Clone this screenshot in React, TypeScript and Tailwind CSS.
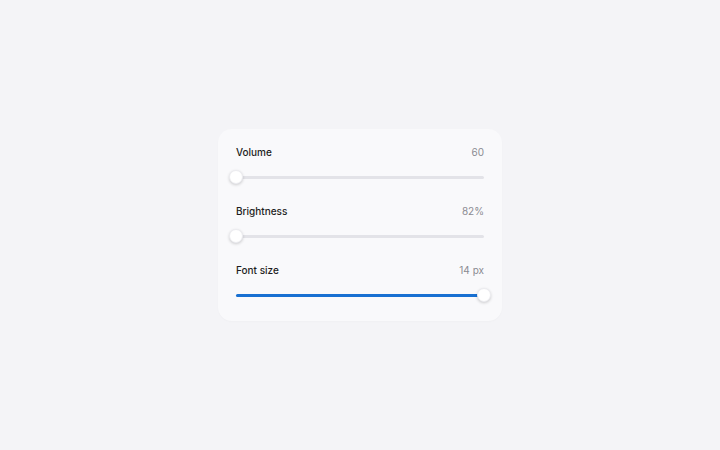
import React from "react";

type Row = { label: string; value: string; pct: number };

const rows: Row[] = [
  { label: "Volume", value: "60", pct: 0 },
  { label: "Brightness", value: "82%", pct: 0 },
  { label: "Font size", value: "14 px", pct: 100 },
];

function Slider({ pct }: { pct: number }) {
  return (
    <div className="relative h-[14px] flex items-center">
      <div className="h-[3px] w-full rounded-full bg-[#e3e3e8]" />
      <div
        className="absolute left-0 h-[3px] rounded-full bg-[#1870d2]"
        style={{ width: `${pct}%` }}
      />
      <div
        className="absolute top-0 h-[14px] w-[14px] -ml-[7px] rounded-full bg-white shadow-[0_1px_3px_rgba(0,0,0,0.18)] border border-[#ececf0]"
        style={{ left: `${pct}%` }}
      />
    </div>
  );
}

export default function App() {
  return (
    <div
      className="min-h-screen w-full bg-[#f4f4f7] flex items-center justify-center"
      style={{ fontFamily: "Inter, 'Liberation Sans', sans-serif" }}
    >
      <div className="w-[284px] rounded-[14px] bg-[#f9f9fb] px-[18px] pt-[16px] pb-[19px] flex flex-col gap-[20px] shadow-[0_1px_2px_rgba(0,0,0,0.02)]">
        {rows.map((r) => (
          <div key={r.label} className="flex flex-col gap-[11px]">
            <div className="flex items-center justify-between h-[14px] text-[10px] leading-[14px]">
              <span className="font-medium text-[#1d1d22]">{r.label}</span>
              <span className="text-[#8b8b92]">{r.value}</span>
            </div>
            <Slider pct={r.pct} />
          </div>
        ))}
      </div>
    </div>
  );
}
